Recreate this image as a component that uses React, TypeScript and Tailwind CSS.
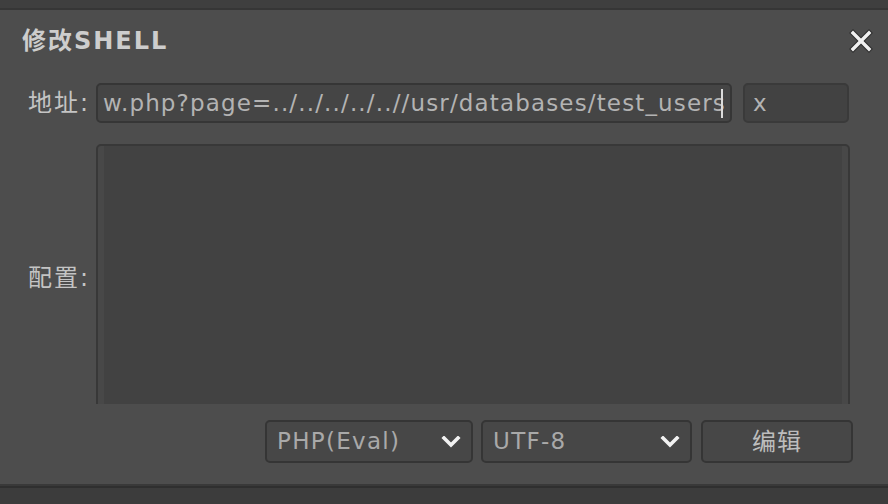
import React from 'react';

const font = { fontFamily: '"DejaVu Sans", "Noto Sans CJK SC", sans-serif' };

const Chevron = () => (
  <svg width="20" height="12" viewBox="0 0 20 12" className="shrink-0">
    <polyline points="3,2 10,9 17,2" fill="none" stroke="#f2f2f2" strokeWidth="3.6" strokeLinecap="square" />
  </svg>
);

const Select = ({ value, width }: { value: string; width: string }) => (
  <div
    className={`${width} h-[43px] flex items-center justify-between pl-[10px] pr-[10px] bg-[#474747] border-2 border-[#353535] rounded-[5px] text-[23px] tracking-[1.3px] text-[#a9a9a9]`}
  >
    <span>{value}</span>
    <Chevron />
  </div>
);

export default function App() {
  return (
    <div className="w-[888px] h-[504px] bg-[#3d3d3d] flex flex-col overflow-hidden" style={font}>
      {/* strip above dialog */}
      <div className="h-[8px] shrink-0 bg-[#3f3f3f]" />
      <div className="h-[2px] shrink-0 bg-[#363636]" />

      {/* dialog */}
      <div className="h-[474px] shrink-0 bg-[#4d4d4d] flex flex-col">
        {/* title */}
        <div className="h-[61px] shrink-0 flex items-center justify-between pl-[22px] pr-[15px]">
          <h2 className="text-[24px] font-bold tracking-[2px] text-[#cdcdcd]">修改SHELL</h2>
          <svg width="24" height="24" viewBox="0 0 24 24">
            <g stroke="#2e2e2e" strokeWidth="5.5" strokeLinecap="square">
              <line x1="4" y1="4" x2="20" y2="20" />
              <line x1="20" y1="4" x2="4" y2="20" />
            </g>
            <g stroke="#f0f0f0" strokeWidth="3.4" strokeLinecap="square">
              <line x1="4" y1="4" x2="20" y2="20" />
              <line x1="20" y1="4" x2="4" y2="20" />
            </g>
          </svg>
        </div>

        {/* address row */}
        <div className="mt-[12px] h-[40px] shrink-0 flex items-center">
          <div className="w-[28px] shrink-0" />
          <label className="w-[64px] text-[24px] tracking-[2px] text-[#c4c4c4] whitespace-nowrap">地址:</label>
          <div className="relative w-[636px] h-[40px] bg-[#454545] border-2 border-[#363636] rounded-[5px] ml-[4px] flex items-center px-[5px]">
            <div className="flex-1 h-full overflow-hidden flex items-center justify-end pr-[3px]">
              <span className="whitespace-nowrap text-[23px] tracking-[1.15px] text-[#b3b3b3] -mr-[4px]">
                http://192.168.1.10/view.php?page=../../../../..//usr/databases/test_users
              </span>
            </div>
            <div className="absolute right-[7px] top-[4px] w-[2px] h-[29px] bg-[#dcdcdc]" />
          </div>
          <div className="ml-[11px] w-[106px] h-[40px] bg-[#424242] border-2 border-[#3a3a3a] rounded-[5px] flex items-center pl-[8px] text-[23px] text-[#b3b3b3]">
            x
          </div>
        </div>

        {/* config row, clipped by the bottom bar */}
        <div className="mt-[21px] h-[260px] shrink-0 overflow-hidden flex items-start">
          <div className="w-[28px] shrink-0" />
          <div className="w-[64px] h-[268px] flex items-center">
            <label className="text-[24px] tracking-[2px] text-[#c4c4c4] whitespace-nowrap">配置:</label>
          </div>
          <div className="ml-[4px] w-[754px] h-[268px] border-2 border-[#383838] rounded-[5px] bg-[#484848] flex px-[6px]">
            <textarea className="flex-1 h-full bg-[#424242] resize-none outline-none" />
          </div>
        </div>

        {/* bottom bar */}
        <div className="h-[80px] shrink-0 flex items-start pt-[16px] pl-[265px] gap-[8px]">
          <Select value="PHP(Eval)" width="w-[208px]" />
          <Select value="UTF-8" width="w-[211px]" />
          <button className="ml-[1px] w-[152px] h-[43px] bg-[#474747] border-2 border-[#353535] rounded-[5px] text-[24px] tracking-[1px] text-[#bdbdbd]">
            编辑
          </button>
        </div>
      </div>

      <div className="h-[2px] shrink-0 bg-[#393939]" />
      <div className="h-[2px] shrink-0 bg-[#2f2f2f]" />
      <div className="flex-1 bg-[#3c3c3c]" />
    </div>
  );
}
